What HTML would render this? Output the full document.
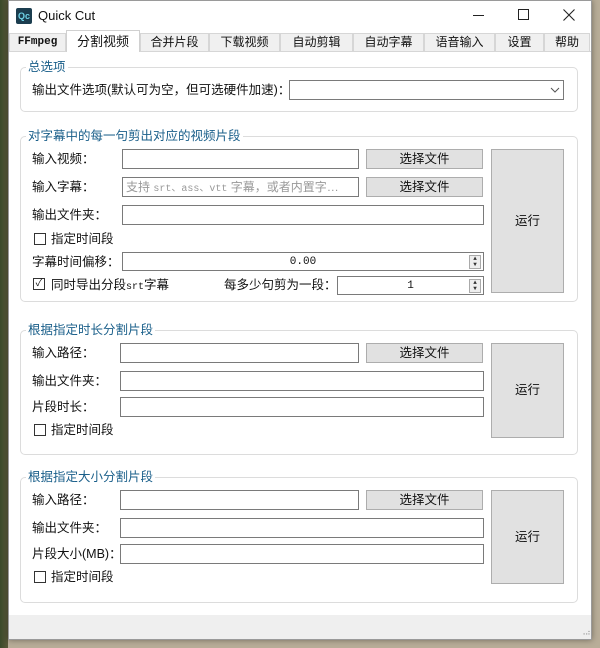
<!DOCTYPE html>
<html><head><meta charset="utf-8"><style>
*{box-sizing:border-box;margin:0;padding:0}
body{width:600px;height:648px;overflow:hidden;position:relative;background:linear-gradient(90deg,#3a4a2a 0,#5a5a3a 8px,#b8ad98 8px);font-family:"Liberation Sans","Noto Sans CJK SC",sans-serif;font-size:12px;color:#111}
.a{position:absolute}
#win{left:8px;top:0;width:584px;height:640px;background:#fff;border:1px solid #9a9a9a;box-shadow:0 0 6px rgba(0,0,0,.4)}
.tab{position:absolute;top:33px;height:18px;background:#f0f0f0;border:1px solid #d6d6d6;border-bottom:none;text-align:center;font-size:12px;line-height:17px}
.sel{top:30px;height:22px;background:#fff;border-color:#d0d0d0;line-height:22px;font-size:13px;z-index:2}
.grp{position:absolute;border:1px solid #dcdcdc;border-radius:5px}
.gl{position:absolute;background:#fff;color:#1a5f8a;font-size:12.5px;padding:0 2px;line-height:14px}
.in{position:absolute;height:20px;border:1px solid #7a7a7a;background:#fff}
.btn{position:absolute;height:20px;border:1px solid #adadad;background:#e1e1e1;text-align:center;line-height:18px;font-size:12.5px}
.run{position:absolute;border:1px solid #adadad;background:#e1e1e1;text-align:center;font-size:12.5px}
.lb{position:absolute;font-size:12.5px;line-height:14px}
.cb{position:absolute;width:12px;height:12px;border:1px solid #333;background:#fff}
.spn{display:flex;align-items:center;justify-content:center;font-family:'Liberation Mono',monospace;font-size:11px}
.sp{position:absolute;right:2px;top:2px;width:12px;height:14px;border:1px solid #aaa;background:#eee;font-size:6px;line-height:6px;text-align:center;color:#333}
</style></head><body>
<div id="win" class="a"></div>
<div class="a" style="left:16px;top:8px;width:16px;height:16px;background:#1b3d4f;border-radius:2px;color:#6fd3e8;font-size:9px;font-weight:bold;line-height:16px;text-align:center">Qc</div>
<div class="a" style="left:38px;top:7px;font-size:13px;line-height:18px">Quick Cut</div>
<div class="a" style="left:473px;top:15px;width:11px;height:1px;background:#222"></div>
<div class="a" style="left:518px;top:9px;width:11px;height:11px;border:1px solid #222"></div>
<svg class="a" style="left:563px;top:9px" width="12" height="12"><path d="M0.5 0.5L11.5 11.5M11.5 0.5L0.5 11.5" stroke="#222" stroke-width="1.1"/></svg>
<div class="tab" style="left:9px;width:57px;font-family:'Liberation Mono',monospace;font-weight:bold;font-size:11px">FFmpeg</div>
<div class="tab sel" style="left:66px;width:74px">分割视频</div>
<div class="tab" style="left:140px;width:69px">合并片段</div>
<div class="tab" style="left:209px;width:71px">下载视频</div>
<div class="tab" style="left:280px;width:73px">自动剪辑</div>
<div class="tab" style="left:353px;width:71px">自动字幕</div>
<div class="tab" style="left:424px;width:71px">语音输入</div>
<div class="tab" style="left:495px;width:49px">设置</div>
<div class="tab" style="left:544px;width:46px">帮助</div>
<div class="a" style="left:9px;top:51px;width:582px;height:564px;border-top:1px solid #d6d6d6"></div>
<div class="a" style="left:9px;top:615px;width:582px;height:24px;background:#efefef"></div>
<div class="a" style="left:580px;top:628px;font-size:8px;color:#999;letter-spacing:-1px">⠠⠴</div>

<div class="grp" style="left:20px;top:67px;width:558px;height:45px"></div>
<div class="gl" style="left:26px;top:60px">总选项</div>
<div class="lb" style="left:32px;top:83px">输出文件选项(默认可为空，但可选硬件加速)：</div>
<div class="in" style="left:289px;top:80px;width:275px"></div>
<svg class="a" style="left:550px;top:87px" width="10" height="6"><path d="M1 1L5 5L9 1" stroke="#555" fill="none"/></svg>

<div class="grp" style="left:20px;top:136px;width:558px;height:166px"></div>
<div class="gl" style="left:26px;top:129px">对字幕中的每一句剪出对应的视频片段</div>
<div class="lb" style="left:32px;top:152px">输入视频：</div>
<div class="in" style="left:122px;top:149px;width:237px"></div>
<div class="btn" style="left:366px;top:149px;width:117px">选择文件</div>
<div class="lb" style="left:32px;top:180px">输入字幕：</div>
<div class="in" style="left:122px;top:177px;width:237px;color:#999;font-size:12px;line-height:18px;padding-left:3px;white-space:nowrap;overflow:hidden">支持 <span style="font-family:'Liberation Mono';font-size:10px">srt、ass、vtt</span> 字幕，或者内置字…</div>
<div class="btn" style="left:366px;top:177px;width:117px">选择文件</div>
<div class="lb" style="left:32px;top:208px">输出文件夹：</div>
<div class="in" style="left:122px;top:205px;width:362px"></div>
<div class="cb" style="left:34px;top:233px"></div>
<div class="lb" style="left:51px;top:232px">指定时间段</div>
<div class="lb" style="left:32px;top:255px">字幕时间偏移：</div>
<div class="in spn" style="left:122px;top:252px;width:362px;height:19px">0.00<div class="sp">▲<br>▼</div></div>
<div class="a" style="left:33px;top:278px;width:12px;height:12px;border:1px solid #333;font-size:10px;line-height:10px;text-align:center">✓</div>
<div class="lb" style="left:51px;top:278px">同时导出分段<span style="font-family:'Liberation Mono';font-size:10px">srt</span>字幕</div>
<div class="lb" style="left:224px;top:278px">每多少句剪为一段：</div>
<div class="in spn" style="left:337px;top:276px;width:147px;height:19px">1<div class="sp">▲<br>▼</div></div>
<div class="run" style="left:491px;top:149px;width:73px;height:144px;line-height:142px">运行</div>

<div class="grp" style="left:20px;top:330px;width:558px;height:125px"></div>
<div class="gl" style="left:26px;top:323px">根据指定时长分割片段</div>
<div class="lb" style="left:32px;top:346px">输入路径：</div>
<div class="in" style="left:120px;top:343px;width:239px"></div>
<div class="btn" style="left:366px;top:343px;width:117px">选择文件</div>
<div class="lb" style="left:32px;top:374px">输出文件夹：</div>
<div class="in" style="left:120px;top:371px;width:364px"></div>
<div class="lb" style="left:32px;top:400px">片段时长：</div>
<div class="in" style="left:120px;top:397px;width:364px"></div>
<div class="cb" style="left:34px;top:424px"></div>
<div class="lb" style="left:51px;top:423px">指定时间段</div>
<div class="run" style="left:491px;top:343px;width:73px;height:95px;line-height:93px">运行</div>

<div class="grp" style="left:20px;top:477px;width:558px;height:126px"></div>
<div class="gl" style="left:26px;top:470px">根据指定大小分割片段</div>
<div class="lb" style="left:32px;top:493px">输入路径：</div>
<div class="in" style="left:120px;top:490px;width:239px"></div>
<div class="btn" style="left:366px;top:490px;width:117px">选择文件</div>
<div class="lb" style="left:32px;top:521px">输出文件夹：</div>
<div class="in" style="left:120px;top:518px;width:364px"></div>
<div class="lb" style="left:32px;top:547px">片段大小(MB)：</div>
<div class="in" style="left:120px;top:544px;width:364px"></div>
<div class="cb" style="left:34px;top:571px"></div>
<div class="lb" style="left:51px;top:570px">指定时间段</div>
<div class="run" style="left:491px;top:490px;width:73px;height:94px;line-height:92px">运行</div>
</body></html>
